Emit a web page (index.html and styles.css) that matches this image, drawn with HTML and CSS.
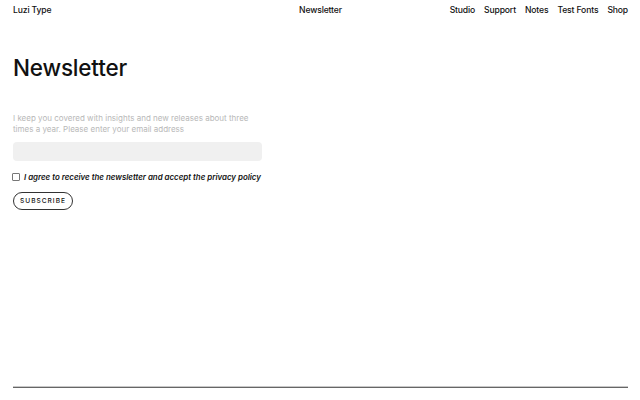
FILE: index.html
```html
<!DOCTYPE html>
<html>
<head>
<meta charset="utf-8">
<link rel="stylesheet" href="styles.css">
</head>
<body>
<header class="top">
  <div class="brand">Luzi Type</div>
  <div class="current">Newsletter</div>
  <nav class="nav">
    <a>Studio</a><a>Support</a><a>Notes</a><a>Test Fonts</a><a>Shop</a>
  </nav>
</header>
<main class="main">
  <h1 class="title">Newsletter</h1>
  <p class="intro">I keep you covered with insights and new releases about three times a year. Please enter your email address</p>
  <div class="field"></div>
  <label class="agree"><span class="box"></span><span class="agree-text">I agree to receive the newsletter and accept the privacy policy</span></label>
  <button class="btn">SUBSCRIBE</button>
</main>
<div class="rule"></div>
</body>
</html>
```
FILE: styles.css
```css
html, body { margin: 0; padding: 0; background: #fff; }
body {
  width: 640px; height: 400px; overflow: hidden;
  font-family: Inter, "Liberation Sans", sans-serif;
  color: #111;
  display: flex; flex-direction: column;
  padding: 0 12px 0 13px; box-sizing: border-box;
}
.top {
  display: grid; grid-template-columns: 1fr auto 1fr;
  align-items: center; height: 20px; font-size: 8.6px; letter-spacing: -0.15px;
  font-weight: 500;
}
.current { text-align: center; }
.nav { display: flex; justify-content: flex-end; gap: 9px; }
.main { flex: 1; display: flex; flex-direction: column; align-items: flex-start; }
.title {
  font-size: 22.5px; font-weight: 500; margin: 36px 0 0; line-height: 24px; letter-spacing: -0.2px;
}
.intro {
  font-size: 8px; line-height: 10.5px; color: #b8b8b8; width: 250px; margin: 33px 0 0;
}
.field {
  width: 249px; height: 19px; background: #f0f0f0; border-radius: 4px; margin-top: 8px;
}
.agree { display: flex; align-items: center; gap: 4px; margin-top: 11px; margin-left: -1px; }
.box { width: 6px; height: 6px; border: 0.5px solid #777; border-radius: 1px; }
.agree-text { font-size: 7.9px; font-style: italic; font-weight: 600; color: #111; }
.btn {
  margin-top: 10px; height: 18px; width: 60px; border: 1px solid #333; border-radius: 9px;
  background: #fff; font-family: Inter, sans-serif; font-size: 6.6px; letter-spacing: 1px;
  font-weight: 500; color: #111; padding: 0; display: flex; align-items: center; justify-content: center;
}
.rule {
  height: 1px; border-top: 1px solid #c8c8c8; background: #666; margin-bottom: 12px;
}
```
